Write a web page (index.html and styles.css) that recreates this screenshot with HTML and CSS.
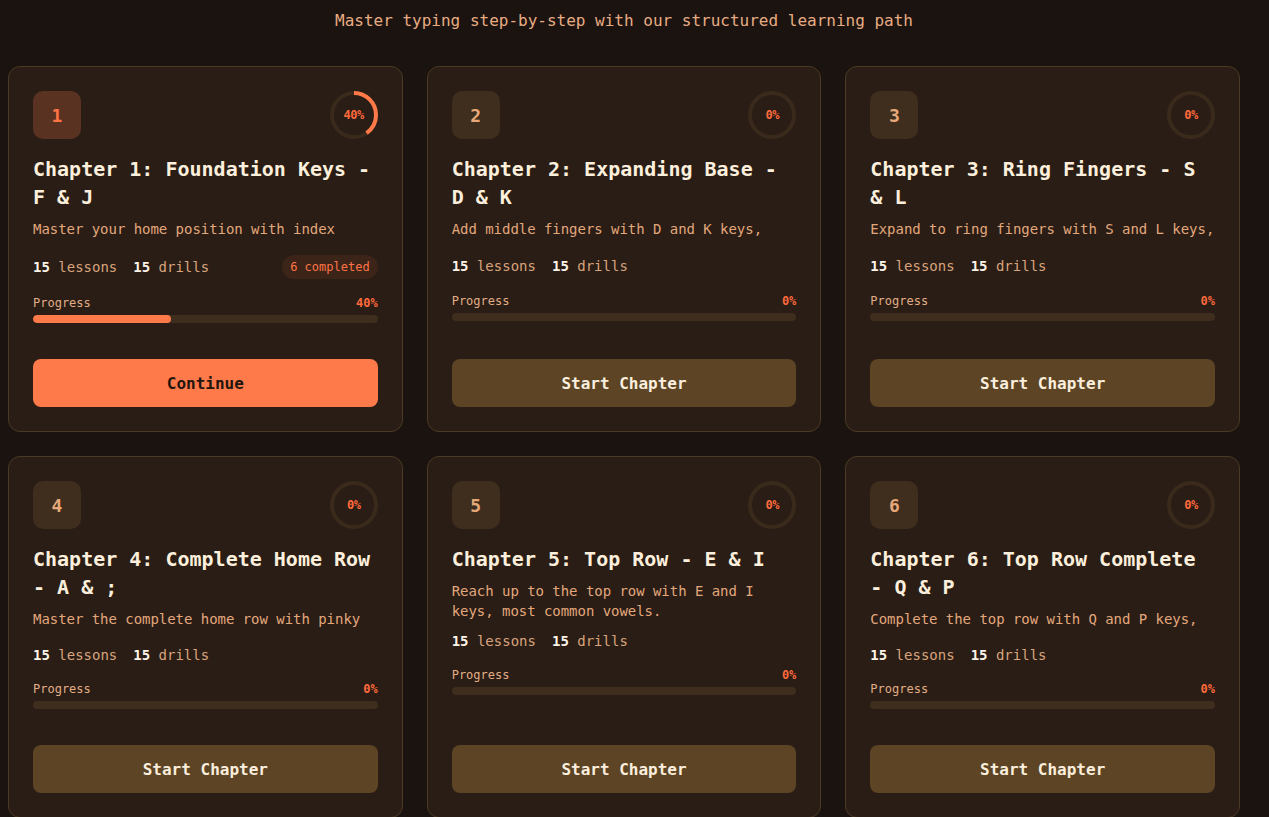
FILE: index.html
```html
<!DOCTYPE html>
<html lang="en">
<head>
<meta charset="utf-8">
<title>Typing Chapters</title>
<link rel="stylesheet" href="styles.css">
</head>
<body>
<main class="page">
  <p class="subtitle">Master typing step-by-step with our structured learning path</p>
  <section class="grid">
    <article class="card">
      <div class="card-head">
        <div class="num num-active">1</div>
        <div class="ring">
          <svg viewBox="0 0 48 48" width="48" height="48"><circle class="ring-track" cx="24" cy="24" r="22"/><circle class="ring-arc" cx="24" cy="24" r="22" stroke-dasharray="55.3 138.3" transform="rotate(-90 24 24)"/></svg>
          <span class="ring-label">40%</span>
        </div>
      </div>
      <h2 class="title">Chapter 1: Foundation Keys - F &amp; J</h2>
      <p class="desc">Master your home position with index</p>
      <div class="stats">
        <span class="stat"><b>15</b> lessons</span>
        <span class="stat"><b>15</b> drills</span>
        <span class="done">6 completed</span>
      </div>
      <div class="progress">
        <div class="progress-head"><span>Progress</span><span class="pct">40%</span></div>
        <div class="bar"><div class="fill" style="width:40%"></div></div>
      </div>
      <button class="btn btn-primary">Continue</button>
    </article>

    <article class="card">
      <div class="card-head">
        <div class="num">2</div>
        <div class="ring">
          <svg viewBox="0 0 48 48" width="48" height="48"><circle class="ring-track" cx="24" cy="24" r="22"/></svg>
          <span class="ring-label">0%</span>
        </div>
      </div>
      <h2 class="title">Chapter 2: Expanding Base - D &amp; K</h2>
      <p class="desc">Add middle fingers with D and K keys,</p>
      <div class="stats stats-plain">
        <span class="stat"><b>15</b> lessons</span>
        <span class="stat"><b>15</b> drills</span>
      </div>
      <div class="progress">
        <div class="progress-head"><span>Progress</span><span class="pct">0%</span></div>
        <div class="bar"><div class="fill" style="width:0%"></div></div>
      </div>
      <button class="btn btn-secondary">Start Chapter</button>
    </article>

    <article class="card">
      <div class="card-head">
        <div class="num">3</div>
        <div class="ring">
          <svg viewBox="0 0 48 48" width="48" height="48"><circle class="ring-track" cx="24" cy="24" r="22"/></svg>
          <span class="ring-label">0%</span>
        </div>
      </div>
      <h2 class="title">Chapter 3: Ring Fingers - S &amp; L</h2>
      <p class="desc">Expand to ring fingers with S and L keys,</p>
      <div class="stats stats-plain">
        <span class="stat"><b>15</b> lessons</span>
        <span class="stat"><b>15</b> drills</span>
      </div>
      <div class="progress">
        <div class="progress-head"><span>Progress</span><span class="pct">0%</span></div>
        <div class="bar"><div class="fill" style="width:0%"></div></div>
      </div>
      <button class="btn btn-secondary">Start Chapter</button>
    </article>

    <article class="card">
      <div class="card-head">
        <div class="num">4</div>
        <div class="ring">
          <svg viewBox="0 0 48 48" width="48" height="48"><circle class="ring-track" cx="24" cy="24" r="22"/></svg>
          <span class="ring-label">0%</span>
        </div>
      </div>
      <h2 class="title">Chapter 4: Complete Home Row - A &amp; ;</h2>
      <p class="desc">Master the complete home row with pinky</p>
      <div class="stats">
        <span class="stat"><b>15</b> lessons</span>
        <span class="stat"><b>15</b> drills</span>
      </div>
      <div class="progress">
        <div class="progress-head"><span>Progress</span><span class="pct">0%</span></div>
        <div class="bar"><div class="fill" style="width:0%"></div></div>
      </div>
      <button class="btn btn-secondary">Start Chapter</button>
    </article>

    <article class="card">
      <div class="card-head">
        <div class="num">5</div>
        <div class="ring">
          <svg viewBox="0 0 48 48" width="48" height="48"><circle class="ring-track" cx="24" cy="24" r="22"/></svg>
          <span class="ring-label">0%</span>
        </div>
      </div>
      <h2 class="title">Chapter 5: Top Row - E &amp; I</h2>
      <p class="desc desc-tall">Reach up to the top row with E and I keys, most common vowels.</p>
      <div class="stats">
        <span class="stat"><b>15</b> lessons</span>
        <span class="stat"><b>15</b> drills</span>
      </div>
      <div class="progress">
        <div class="progress-head"><span>Progress</span><span class="pct">0%</span></div>
        <div class="bar"><div class="fill" style="width:0%"></div></div>
      </div>
      <button class="btn btn-secondary">Start Chapter</button>
    </article>

    <article class="card">
      <div class="card-head">
        <div class="num">6</div>
        <div class="ring">
          <svg viewBox="0 0 48 48" width="48" height="48"><circle class="ring-track" cx="24" cy="24" r="22"/></svg>
          <span class="ring-label">0%</span>
        </div>
      </div>
      <h2 class="title">Chapter 6: Top Row Complete - Q &amp; P</h2>
      <p class="desc">Complete the top row with Q and P keys,</p>
      <div class="stats">
        <span class="stat"><b>15</b> lessons</span>
        <span class="stat"><b>15</b> drills</span>
      </div>
      <div class="progress">
        <div class="progress-head"><span>Progress</span><span class="pct">0%</span></div>
        <div class="bar"><div class="fill" style="width:0%"></div></div>
      </div>
      <button class="btn btn-secondary">Start Chapter</button>
    </article>
  </section>
</main>
</body>
</html>
```

FILE: styles.css
```css
* { box-sizing: border-box; }

html, body {
  margin: 0;
  padding: 0;
  background: #1b1310;
  font-family: "DejaVu Sans Mono", "Liberation Mono", monospace;
  color: #e3a77c;
}

.page {
  width: 1232px;
  margin-left: 8px;
  padding-top: 9px;
}

.subtitle {
  margin: 0 0 33px;
  text-align: center;
  font-size: 16px;
  line-height: 24px;
  color: #e8ac82;
}

.grid {
  display: grid;
  grid-template-columns: repeat(3, 1fr);
  column-gap: 24px;
  row-gap: 24px;
}

.card {
  display: flex;
  flex-direction: column;
  background: #291d15;
  border: 1px solid #4b3a24;
  border-radius: 12px;
  padding: 24px;
}

.card-head {
  display: flex;
  justify-content: space-between;
  align-items: center;
  height: 48px;
}

.num {
  width: 48px;
  height: 48px;
  border-radius: 10px;
  background: #3f2d1d;
  color: #e6a878;
  font-size: 18px;
  font-weight: bold;
  display: flex;
  align-items: center;
  justify-content: center;
}

.num-active {
  background: #5a3222;
  color: #ff7445;
}

.ring {
  position: relative;
  width: 48px;
  height: 48px;
}

.ring svg { display: block; }

.ring-track {
  fill: none;
  stroke: #3a2a1b;
  stroke-width: 4;
}

.ring-arc {
  fill: none;
  stroke: #ff7a48;
  stroke-width: 4;
}

.ring-label {
  position: absolute;
  inset: 0;
  display: flex;
  align-items: center;
  justify-content: center;
  font-size: 12px;
  font-weight: bold;
  letter-spacing: -0.5px;
  color: #ff6a3d;
}

.title {
  margin: 16px 0 0;
  font-size: 20px;
  line-height: 28px;
  font-weight: bold;
  color: #fcefdc;
}

.desc {
  margin: 8px 0 0;
  font-size: 14px;
  line-height: 20px;
  height: 20px;
  letter-spacing: -0.04px;
  color: #e3a77c;
}

.desc-tall { height: 34px; }

.stats {
  margin-top: 16px;
  display: flex;
  align-items: center;
  gap: 16px;
  min-height: 20px;
  font-size: 14px;
  line-height: 20px;
  color: #d9a47c;
}

.stats-plain { min-height: 22px; }

.stat b {
  color: #fdf3e6;
  font-weight: bold;
}

.done {
  margin-left: auto;
  height: 24px;
  line-height: 24px;
  padding: 0 8px;
  border-radius: 999px;
  background: #3d2419;
  color: #ff7445;
  font-size: 12px;
}

.progress {
  margin-top: 16px;
  margin-bottom: 36px;
}

.progress-head {
  display: flex;
  justify-content: space-between;
  font-size: 12px;
  line-height: 16px;
  color: #e2ad86;
}

.pct {
  color: #ff6a3d;
  font-weight: bold;
}

.bar {
  margin-top: 4px;
  height: 8px;
  border-radius: 999px;
  background: #3f2e1e;
  overflow: hidden;
}

.fill {
  height: 100%;
  border-radius: 999px;
  background: #ff7a4a;
}

.btn {
  margin-top: auto;
  height: 48px;
  border: none;
  border-radius: 8px;
  font-family: inherit;
  font-size: 16px;
  font-weight: bold;
  cursor: pointer;
}

.btn-primary {
  background: #ff7a4a;
  color: #22150e;
}

.btn-secondary {
  background: #5c4424;
  color: #fbeedd;
}
```
